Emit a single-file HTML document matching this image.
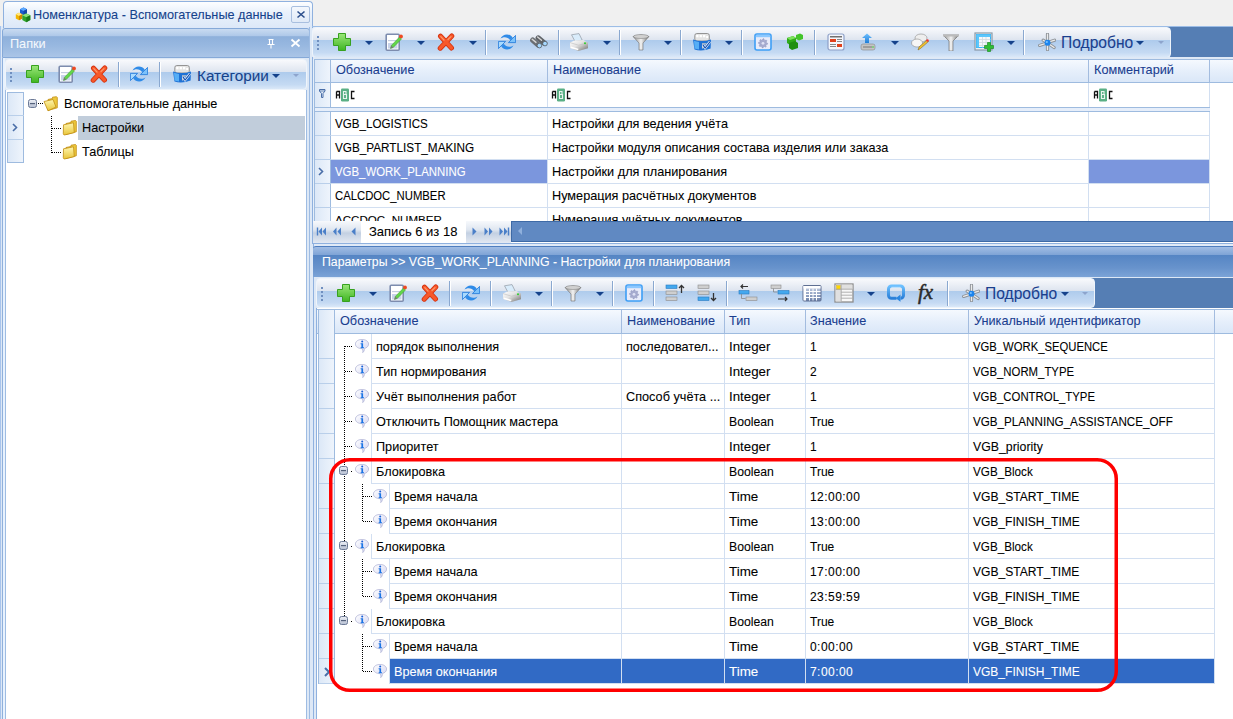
<!DOCTYPE html>
<html><head><meta charset="utf-8"><style>
*{box-sizing:border-box;margin:0;padding:0}
html,body{width:1233px;height:719px;overflow:hidden;background:#f0f0f0;font-family:"Liberation Sans",sans-serif;font-size:12.7px;color:#000;position:relative}
.a{position:absolute}
.t{position:absolute;white-space:nowrap;line-height:14px;-webkit-text-stroke:0.08px currentColor}
.lat{font-size:12px}
.cap{font-size:11.6px}
svg.a{overflow:visible}
#tab{left:3px;top:1px;width:310px;height:27px;border:1px solid #8fb1df;border-bottom:none;border-radius:4px 4px 0 0;background:linear-gradient(#fdfeff,#e9f1fb 40%,#dce8f8)}
#frame{left:0;top:26px;width:1233px;height:693px;background:#dde8f6}
#lp{left:0px;top:26px;width:310px;height:693px;background:#dde8f6;border-left:1px solid #a8c4ec}
#lphdr{left:2px;top:28px;width:308px;height:30px;border:1px solid #85a9d8;border-radius:3px 3px 0 0;background:linear-gradient(#c9dbf1,#adc7e8 26%,#8eb0db 27%,#98b8e0 60%,#aac5e7)}
.tb{background:linear-gradient(#f8f9fc,#dde4ef 42%,#aecbec 43%,#c5daf3 85%,#dae8f8);border:1px solid #eef4fb;border-radius:4px}
#lptb{left:5px;top:59px;width:302px;height:31px}
#lptree{left:5px;top:90px;width:302px;height:629px;background:#fff;border-left:1px solid #9ebce3;border-right:1px solid #9ebce3}
#rtb{left:312px;top:27px;width:859px;height:31px;border-radius:4px}
#rdark{left:1160px;top:27px;width:73px;height:30px;background:#557eb4}
.hdr{background:linear-gradient(#f5f9fe,#e6effb 50%,#dae7f8);border-top:1px solid #9ebbdf;border-bottom:1px solid #9ebbdf}
.hc{color:#1a3d8f}
.vl{position:absolute;width:1px;background:#d2dff1}
.hl{position:absolute;height:1px;background:#d2dff1}
.ind{background:linear-gradient(90deg,#dce8f7,#eef4fc);border-right:1px solid #9ebbdf}
#dhdr{left:313px;top:246px;width:920px;height:31px;border-radius:3px 0 0 0;border-top:1px solid #4f7ebf;background:linear-gradient(#a1bde4,#7fa4d6 26%,#5585c4 27%,#6893cc 70%,#7ba3d7)}
#dtb{left:316px;top:278px;width:779px;height:30px;border-radius:4px}
#ddark{left:1080px;top:278px;width:153px;height:30px;background:#557eb4}
.sep{position:absolute;width:1px;background:#8aa8d0;box-shadow:1px 0 0 #fff}
.dd{position:absolute;width:0;height:0;border-left:4px solid transparent;border-right:4px solid transparent;border-top:4.5px solid #15428b}
.ddl{position:absolute;width:0;height:0;border-left:3px solid transparent;border-right:3px solid transparent;border-top:3.5px solid #8da4cc}
</style></head><body>
<svg width="0" height="0" style="position:absolute">
<defs>
<linearGradient id="gGreen" x1="0" y1="0" x2="0" y2="1"><stop offset="0" stop-color="#9be77a"/><stop offset="1" stop-color="#3fb522"/></linearGradient>
<linearGradient id="gRed" x1="0" y1="0" x2="1" y2="1"><stop offset="0" stop-color="#ff7a4a"/><stop offset="1" stop-color="#e02c10"/></linearGradient>
<linearGradient id="gBlue" x1="0" y1="0" x2="0" y2="1"><stop offset="0" stop-color="#6ec0ff"/><stop offset="1" stop-color="#1f7ed8"/></linearGradient>
<linearGradient id="gMetal" x1="0" y1="0" x2="1" y2="0"><stop offset="0" stop-color="#8a8a8a"/><stop offset=".5" stop-color="#f2f2f2"/><stop offset="1" stop-color="#6f6f6f"/></linearGradient>
<linearGradient id="gFolder" x1="0" y1="0" x2="0" y2="1"><stop offset="0" stop-color="#fff7b0"/><stop offset="1" stop-color="#e8c53a"/></linearGradient>
<symbol id="iPlus" viewBox="0 0 18 18"><path d="M5.5 .5h7v5h5v7h-5v5h-7v-5h-5v-7h5z" fill="url(#gGreen)" stroke="#37a11f" stroke-width="1"/></symbol>
<symbol id="iEdit" viewBox="0 0 18 18"><rect x="1.2" y="1.2" width="13" height="16" rx="1" fill="#fff" stroke="#7d8cae" stroke-width="1.6"/><rect x="3" y="7" width="9.5" height="1.2" fill="#c5cde0"/><rect x="3" y="10" width="9.5" height="5.5" fill="#c9d3ea"/><path d="M5.5 15.5l.8-3L14.5 4l2 2-8.2 8.4z" fill="#62d64a" stroke="#3c9a2a" stroke-width=".5"/><path d="M5.5 15.5l.8-3 2 2z" fill="#777"/><circle cx="16" cy="3.4" r="1.9" fill="#ee4a22"/></symbol>
<symbol id="iDel" viewBox="0 0 18 18"><path d="M3.5 3.2L14.5 15M14.8 3L3.2 15.2" stroke="#d4320f" stroke-width="5" stroke-linecap="round"/><path d="M3.5 3.2L14.5 15M14.8 3L3.2 15.2" stroke="#f7582a" stroke-width="3.4" stroke-linecap="round"/><path d="M3.8 3.6L7 7M14 3.6L11 6.5" stroke="#ff9a6a" stroke-width="1.2" stroke-linecap="round"/></symbol>
<symbol id="iRef" viewBox="0 0 18 18"><path d="M2.5 5.8C4 1.2 11.5-.5 14.8 4.8L12.2 7.3C10.2 3.8 5.2 3.4 2.5 5.8Z" fill="#2f8be8"/><path d="M17.6 2.4V9.6H10.4Z" fill="#7cc2fb" stroke="#2a7fdc" stroke-width=".9" stroke-linejoin="round"/><path d="M15.5 12.2C14 16.8 6.5 18.5 3.2 13.2L5.8 10.7C7.8 14.2 12.8 14.6 15.5 12.2Z" fill="#2f8be8"/><path d="M.4 15.6V8.4H7.6Z" fill="#a9dafe" stroke="#2a7fdc" stroke-width=".9" stroke-linejoin="round"/></symbol>
<symbol id="iBino" viewBox="0 0 18 14"><path d="M2.8 5.2L8.6 10.2" stroke="#6a6e73" stroke-width="5.4" stroke-linecap="round"/><path d="M8.3 3L14.5 8.2" stroke="#5f6368" stroke-width="5.4" stroke-linecap="round"/><path d="M2.2 4.2L6 7.4M7.6 2L11.5 5.2" stroke="#d6d6d6" stroke-width="1.4" stroke-linecap="round"/><circle cx="9.4" cy="10.6" r="2.3" fill="#a6d8ff" stroke="#4e5156" stroke-width=".7"/><circle cx="15" cy="8.6" r="2.3" fill="#a6d8ff" stroke="#4e5156" stroke-width=".7"/></symbol>
<symbol id="iPrint" viewBox="0 0 18 18"><linearGradient id="gPr" x1="0" y1="0" x2="1" y2="1"><stop offset="0" stop-color="#ffffff"/><stop offset=".45" stop-color="#e2e2e2"/><stop offset="1" stop-color="#6e6e6e"/></linearGradient><path d="M1.5 1.8L9 .6l3.2 6.6-7.2 1.2z" fill="#d9ecfb" stroke="#9aa3ad" stroke-width=".8" stroke-linejoin="round"/><path d="M0 9.6L4.5 7.6 13.5 7l4.5 2.8v5.4L8.5 18 0 15z" fill="url(#gPr)"/><path d="M0 9.6l8.5 2.6L18 9.8" stroke="#bdbdbd" stroke-width=".6" fill="none"/><path d="M.8 14.2l7.5 2.4" stroke="#fff" stroke-width="1.6"/><circle cx="15" cy="10.2" r="1" fill="#2ccf2c"/></symbol>
<symbol id="iFunnel" viewBox="0 0 18 18"><path d="M1 3.5Q9 .5 17 3.5L11 10v7H7v-7z" fill="url(#gMetal)" stroke="#707070" stroke-width=".6"/><ellipse cx="9" cy="3.5" rx="7.5" ry="2" fill="#d0d0d0" stroke="#777" stroke-width=".5"/></symbol>
<symbol id="iBox" viewBox="0 0 18 18"><rect x="1.8" y=".5" width="14.5" height="7.5" rx="2" fill="#e4e4e4" stroke="#8a8a8a" stroke-width=".9"/><rect x="3.2" y="2" width="2.3" height="2.3" fill="#fff"/><rect x="6.6" y="2" width="2.3" height="2.3" fill="#fff"/><rect x="10" y="2" width="2.3" height="2.3" fill="#fff"/><rect x="13.2" y="3" width="2" height="2" fill="#fff"/><path d="M0 6.5Q9 9.5 18 6.5L17.6 15.5Q9 18.8 1.5 16.5z" fill="#1f72d6"/><path d="M1 7.8Q4 8.8 6 9v7.4Q3 16.2 1.6 15.6z" fill="#56aef6"/><path d="M9.6 15.5V10.8h4" stroke="#c8c8c8" stroke-width="1.2" fill="none"/><path d="M9.8 11.6l2.3 3.4 4.8-6.2" stroke="#fff" stroke-width="2.4" fill="none"/><path d="M9.8 11.6l2.3 3.4 4.8-6.2" stroke="#1550b0" stroke-width="1.2" fill="none"/></symbol>
<symbol id="iGearWin" viewBox="0 0 18 18"><rect x="1" y="1" width="16" height="16" rx="2" fill="#e9ecfa" stroke="#3d9ef6" stroke-width="1.6"/><rect x="1.8" y="1.8" width="14.4" height="2.4" fill="#8cc8ff"/><path d="M13.60 10.30L13.51 11.20L12.14 11.60L11.83 12.19L12.25 13.55L11.56 14.12L10.30 13.44L9.66 13.63L9.00 14.90L8.10 14.81L7.70 13.44L7.11 13.13L5.75 13.55L5.18 12.86L5.86 11.60L5.67 10.96L4.40 10.30L4.49 9.40L5.86 9.00L6.17 8.41L5.75 7.05L6.44 6.48L7.70 7.16L8.34 6.97L9.00 5.70L9.90 5.79L10.30 7.16L10.89 7.47L12.25 7.05L12.82 7.74L12.14 9.00L12.33 9.64Z" fill="#a6abcf" stroke="#8d93bb" stroke-width=".5"/><circle cx="9" cy="10.3" r="1.4" fill="#dfe2f5"/></symbol>
<symbol id="iCubes" viewBox="0 0 18 18"><path d="M1 5l6-2 3 2v5l-6 2-3-2z" fill="#2faa1a"/><path d="M3 10l6-2 3 2v5l-6 2-3-2z" fill="#1f8f12"/><path d="M10 2l4-1.5 3 1.5v4l-4 1.5-3-1.5z" fill="#43c42a"/><path d="M1 5l6-2 3 2-6 2z" fill="#7be25a"/></symbol>
<symbol id="iReport" viewBox="0 0 18 18"><rect x="1" y="1" width="16" height="16" rx="2" fill="#f4f6fb" stroke="#8da0c8" stroke-width="1.2"/><rect x="3" y="3" width="12" height="1.5" fill="#707070"/><rect x="3" y="6" width="6" height="3" fill="#e0401c"/><rect x="10" y="6" width="5" height="1" fill="#888"/><rect x="10" y="8" width="5" height="1" fill="#888"/><rect x="3" y="11" width="6" height="1" fill="#888"/><rect x="3" y="13" width="6" height="1" fill="#888"/><rect x="10" y="11" width="5" height="3" fill="#e0401c"/></symbol>
<symbol id="iUpload" viewBox="0 0 18 18"><path d="M8 .5L13 5h-3v5H6V5H3z" fill="url(#gBlue)"/><rect x="2" y="11" width="14" height="6" rx="2" fill="#c4c4c4" stroke="#888" stroke-width=".6"/><rect x="4" y="13.5" width="9" height="1" fill="#777"/><circle cx="14" cy="14" r=".8" fill="#35d135"/></symbol>
<symbol id="iChat" viewBox="0 0 18 18"><ellipse cx="10" cy="5" rx="6" ry="4" fill="#eee" stroke="#999" stroke-width=".7"/><ellipse cx="6" cy="10" rx="5.5" ry="4" fill="#f6f6f6" stroke="#999" stroke-width=".7"/><path d="M7 17l1-3 8-7 1.5 1.5-8 7z" fill="#f1c232" stroke="#7a5a10" stroke-width=".5"/><circle cx="16.5" cy="7.5" r="1.2" fill="#e33"/></symbol>
<symbol id="iFunnel2" viewBox="0 0 18 18"><path d="M1 2h16l-6 6v10H7V8z" fill="url(#gMetal)" stroke="#666" stroke-width=".6"/><rect x="1" y="1.5" width="16" height="2" fill="#bbb"/></symbol>
<symbol id="iTable" viewBox="0 0 20 20"><rect x="1" y="1" width="17" height="17" fill="#eef1f3" stroke="#8a9aa8" stroke-width="1.2"/><rect x="2.5" y="2.5" width="14" height="13" fill="#f4f8fa" stroke="#39b4f4" stroke-width="1"/><rect x="2.5" y="2.5" width="14" height="2.5" fill="#5cc6fb"/><rect x="2.5" y="2.5" width="2.5" height="13" fill="#5cc6fb"/><path d="M5 7.5h11.5M5 10.5h11.5M5 13.5h11.5M8.5 5v10.5M12 5v10.5" stroke="#cfd8de" stroke-width=".8"/><path d="M13.5 10.5h3v3h3v3h-3v3h-3v-3h-3v-3h3z" fill="#2fbf36" stroke="#1e8e24" stroke-width=".7"/></symbol>
<symbol id="iStar" viewBox="0 0 18 18"><path d="M9.5 1.2v15.5M9 10L1.6 12.4M9 9.5L5.2 7.2M9.5 9.5L16.6 7.2M9.5 10l6.6 4.5" stroke="#8e9399" stroke-width="3.2" stroke-linecap="round"/><path d="M9.5 1.2v15.5M9 10L1.6 12.4M9 9.5L5.2 7.2M9.5 9.5L16.6 7.2M9.5 10l6.6 4.5" stroke="#ececec" stroke-width="1.3" stroke-linecap="round"/><circle cx="9.5" cy="9.8" r="3" fill="#1b84ee"/><circle cx="8.8" cy="9" r="1.1" fill="#7cc4ff"/></symbol>
<symbol id="iInfo" viewBox="0 0 14 14"><linearGradient id="gBub" x1="0" y1="0" x2="1" y2="1"><stop offset="0" stop-color="#ffffff"/><stop offset="1" stop-color="#d2d4f2"/></linearGradient><path d="M7 .4C10.6.4 13.6 2.4 13.6 5.1c0 2.2-2 3.9-4.3 4.4.3 1.5-.3 3-1.6 4.1.4-1.3.2-2.7-.6-3.9C3.5 9.6.4 7.8.4 5.1.4 2.4 3.4.4 7 .4z" fill="url(#gBub)" stroke="#b0b4d6" stroke-width=".8"/><circle cx="7.2" cy="2.5" r="1" fill="#1a5fd6"/><path d="M5.6 4.3h2.5v3.9h.9v1h-3.4v-1h.8V5.3h-.8z" fill="#1b74e4"/></symbol>
<symbol id="iMinus" viewBox="0 0 9 9"><linearGradient id="gMin" x1="0" y1="0" x2="0" y2="1"><stop offset="0" stop-color="#eef1f7"/><stop offset="1" stop-color="#b4bdd0"/></linearGradient><rect x=".5" y=".5" width="8" height="8" rx="2" fill="url(#gMin)" stroke="#6c7a96" stroke-width="1"/><rect x="2" y="4" width="5" height="1.2" fill="#55627c"/></symbol>
<symbol id="iFolder" viewBox="0 0 16 16"><path d="M5 3.5l4.5-1V1.2l4-.5.8.8v10.3L5 14.5z" fill="#ecc83c" stroke="#c08d12" stroke-width=".8" stroke-linejoin="round"/><path d="M1 5.5l9-2 3 7.5-8 3.8z" fill="url(#gFolder)" stroke="#c08d12" stroke-width=".8" stroke-linejoin="round"/></symbol>
<symbol id="iFolderC" viewBox="0 0 16 16"><path d="M4 3.5l5-1V1.2l4.5-.7.8.8v10.5L4 14.5z" fill="#ecc83c" stroke="#c08d12" stroke-width=".8" stroke-linejoin="round"/><path d="M1.5 4.8l10-2 .8 9.8-9.5 2.3c-1 .2-1.5-.5-1.5-1.2z" fill="url(#gFolder)" stroke="#c08d12" stroke-width=".8" stroke-linejoin="round"/></symbol>
<symbol id="iApp" viewBox="0 0 16 16"><path d="M5 2.2L8.5.5 12 2.2v4.3L8.5 8.2 5 6.5z" fill="#1c5fd0"/><path d="M5 2.2L8.5.5 12 2.2 8.5 3.9z" fill="#5aa8ff"/><path d="M8.5 3.9L12 2.2v4.3L8.5 8.2z" fill="#1448a8"/><path d="M.8 7.3L4 5.8 7.3 7.3v4.3L4 13.2.8 11.6z" fill="#f2b600"/><path d="M.8 7.3L4 5.8 7.3 7.3 4 8.9z" fill="#ffe680"/><path d="M4 8.9l3.3-1.6v4.3L4 13.2z" fill="#d08a00"/><path d="M7.3 8.2l4-1.8 4 1.8v4.8l-4 2.2-4-2.2z" fill="#2ea52a"/><path d="M7.3 8.2l4-1.8 4 1.8-4 2z" fill="#8de07a"/><path d="M11.3 10.2l4-2v4.8l-4 2.2z" fill="#1c7a1a"/></symbol>
<symbol id="iUp" viewBox="0 0 20 18"><rect x="1" y="1" width="11" height="3.5" fill="#43a8ee" stroke="#2a7bc0" stroke-width=".6"/><rect x="1" y="7" width="11" height="3.5" fill="#cfcfcf" stroke="#8b8b8b" stroke-width=".6"/><rect x="1" y="13" width="11" height="3.5" fill="#cfcfcf" stroke="#8b8b8b" stroke-width=".6"/><path d="M16.5 9V1.5M14 4l2.5-2.5L19 4" stroke="#333" stroke-width="1.3" fill="none"/></symbol>
<symbol id="iDown" viewBox="0 0 20 18"><rect x="1" y="1" width="11" height="3.5" fill="#cfcfcf" stroke="#8b8b8b" stroke-width=".6"/><rect x="1" y="7" width="11" height="3.5" fill="#cfcfcf" stroke="#8b8b8b" stroke-width=".6"/><rect x="1" y="13" width="11" height="3.5" fill="#43a8ee" stroke="#2a7bc0" stroke-width=".6"/><path d="M16.5 9v7.5M14 14l2.5 2.5L19 14" stroke="#333" stroke-width="1.3" fill="none"/></symbol>
<symbol id="iOut" viewBox="0 0 20 18"><path d="M3 2.5h7M5 .5l-2 2 2 2" stroke="#333" stroke-width="1.2" fill="none"/><rect x="1" y="6.5" width="10" height="3.5" fill="#43a8ee" stroke="#2a7bc0" stroke-width=".6"/><path d="M3.5 10v4.5h4" stroke="#888" stroke-width=".8" fill="none"/><rect x="8" y="13" width="11" height="3.5" fill="#cfcfcf" stroke="#8b8b8b" stroke-width=".6"/></symbol>
<symbol id="iIn" viewBox="0 0 20 18"><rect x="1" y="1" width="10" height="3.5" fill="#cfcfcf" stroke="#8b8b8b" stroke-width=".6"/><path d="M3.5 4.5v3.5h4" stroke="#888" stroke-width=".8" fill="none"/><rect x="8" y="6.5" width="11" height="3.5" fill="#43a8ee" stroke="#2a7bc0" stroke-width=".6"/><path d="M8 15h9M15 13l2 2-2 2" stroke="#333" stroke-width="1.2" fill="none"/></symbol>
<symbol id="iCalc" viewBox="0 0 20 18"><linearGradient id="gCalc" x1="0" y1="0" x2="0" y2="1"><stop offset="0" stop-color="#c9d3e6"/><stop offset="1" stop-color="#6e83ab"/></linearGradient><rect x="1" y="1.5" width="18" height="15.5" rx="1" fill="url(#gCalc)" stroke="#5f6f92" stroke-width="1"/><rect x="1.5" y="2" width="17" height="2.5" fill="#fff"/><rect x="1.5" y="2" width="2.5" height="14.5" fill="#fff"/><path d="M4 7.5h14.5M4 10.5h14.5M4 13.5h14.5M7.5 4.5v12M11 4.5v12M14.5 4.5v12" stroke="#fff" stroke-width="1"/></symbol>
<symbol id="iTbl2" viewBox="0 0 20 20"><rect x="1" y="1" width="18" height="18" fill="#f8f8f8" stroke="#8d8d8d" stroke-width="1.3"/><rect x="1.6" y="1.6" width="5.6" height="16.8" fill="#e0e0e0"/><rect x="7.2" y="1.6" width="11.2" height="4.6" fill="#e0e0e0"/><rect x="2.6" y="2.6" width="3.6" height="3.6" fill="#ffd800" stroke="#e0b000" stroke-width=".4"/><path d="M7.2 1.6v16.8M1.6 6.2h16.8M7.2 9.2h11.2M7.2 12.2h11.2M7.2 15.2h11.2" stroke="#a0a0a0" stroke-width=".8"/></symbol>
<symbol id="iLoop" viewBox="0 0 18 18"><linearGradient id="gLoop" x1="0" y1="0" x2="0" y2="1"><stop offset="0" stop-color="#6cc0ff"/><stop offset="1" stop-color="#2a7fd8"/></linearGradient><path d="M9.5 14.2H4.5a3 3 0 0 1-3-3V5a3 3 0 0 1 3-3h9a3 3 0 0 1 3 3v6.2a3 3 0 0 1-3 3" stroke="url(#gLoop)" stroke-width="3" fill="none"/><path d="M4.5 3.3h9" stroke="#c8e8ff" stroke-width=".8"/><path d="M13.5 10.6l-4.8 3.6 4.8 3.6z" fill="#2a86e0"/></symbol>
</defs></svg>

<div id="frame" class="a"></div>
<div id="lp" class="a"></div>
<div class="vl" style="left:2px;top:58px;height:661px;background:#8fb0dc"></div>
<div class="a" style="left:3px;top:58px;width:2px;height:661px;background:#e8f2fe"></div>
<div id="tab" class="a"></div>
<svg class="a" style="left:15px;top:7px" width="16" height="16"><use href="#iApp"/></svg>
<div class="t " style="left:33px;top:8px;color:#15428b">Номенклатура - Вспомогательные данные</div>
<div class="a" style="left:291px;top:6px;width:19px;height:17px;border:1px solid #a8bfdf;border-radius:2px;background:linear-gradient(#f4f8fd,#e0eaf7)"></div>
<svg class="a" style="left:297px;top:11px" width="8" height="7"><path d="M.5 .5l7 6M7.5 .5l-7 6" stroke="#2c4f8c" stroke-width="1.6"/></svg>
<div id="lphdr" class="a"></div>
<div class="t " style="left:10px;top:37px;color:#f4f8fd">Папки</div>
<svg class="a" style="left:267px;top:39px" width="8" height="10"><path d="M1.5 .5h5M2.5 .5v5M5.5 .5v5M.5 5.5h7M4 5.5v4" stroke="#fff" stroke-width="1.1" fill="none"/></svg>
<svg class="a" style="left:291px;top:39px" width="9" height="8"><path d="M.5 .5l8 7M8.5 .5l-8 7" stroke="#fff" stroke-width="1.8"/></svg>
<div id="lptb" class="a tb"></div>
<div class="a" style="left:10px;top:68px;width:2px;height:2px;background:#6f8fbf"></div>
<div class="a" style="left:10px;top:72px;width:2px;height:2px;background:#6f8fbf"></div>
<div class="a" style="left:10px;top:76px;width:2px;height:2px;background:#6f8fbf"></div>
<div class="a" style="left:10px;top:80px;width:2px;height:2px;background:#6f8fbf"></div>
<svg class="a" style="left:26px;top:65px" width="18" height="18"><use href="#iPlus"/></svg>
<svg class="a" style="left:58px;top:65px" width="18" height="18"><use href="#iEdit"/></svg>
<svg class="a" style="left:90px;top:65px" width="18" height="18"><use href="#iDel"/></svg>
<div class="sep" style="left:118px;top:62px;height:25px"></div>
<svg class="a" style="left:130px;top:65px" width="18" height="18"><use href="#iRef"/></svg>
<div class="sep" style="left:159px;top:62px;height:25px"></div>
<svg class="a" style="left:173px;top:65px" width="18" height="18"><use href="#iBox"/></svg>
<div class="t " style="left:197px;top:67px;font-size:15.3px;line-height:17px;color:#15428b">Категории</div>
<div class="dd" style="left:272px;top:74px"></div>
<div class="ddl" style="left:293px;top:74px"></div>
<div id="lptree" class="a"></div>
<div class="a ind" style="left:7px;top:92px;width:17px;height:71px;border:1px solid #9ebbdf;border-left:1px solid #9ebbdf"></div>
<div class="hl" style="left:8px;top:115px;width:16px;background:#b9cfea"></div>
<div class="hl" style="left:8px;top:139px;width:16px;background:#b9cfea"></div>
<svg class="a" style="left:12px;top:123px" width="6" height="9"><path d="M1 1l3.5 3.5L1 8" stroke="#4a6ea8" stroke-width="1.6" fill="none"/></svg>
<div class="a" style="left:78px;top:116px;width:227px;height:24px;background:#c1cddb"></div>
<svg class="a" style="left:28px;top:99px" width="9" height="9"><use href="#iMinus"/></svg>
<svg class="a" style="left:43px;top:96px" width="16" height="16"><use href="#iFolder"/></svg>
<svg class="a" style="left:62px;top:120px" width="16" height="16"><use href="#iFolderC"/></svg>
<svg class="a" style="left:62px;top:144px" width="16" height="16"><use href="#iFolderC"/></svg>
<svg class="a" style="left:0;top:0" width="310" height="719"><path d="M38 103.5h5M51.5 116v37M52 128.5h9M52 152.5h9" stroke="#000" stroke-width="1" stroke-dasharray="1 1" fill="none"/></svg>
<div class="t " style="left:64px;top:97px;">Вспомогательные данные</div>
<div class="t " style="left:82px;top:121px;">Настройки</div>
<div class="t " style="left:82px;top:145px;">Таблицы</div>
<div class="hl" style="left:312px;top:26px;width:921px;background:#9dbde6"></div>
<div id="rdark" class="a"></div>
<div id="rtb" class="a tb"></div>
<div class="a" style="left:317px;top:36px;width:2px;height:2px;background:#6f8fbf"></div>
<div class="a" style="left:317px;top:40px;width:2px;height:2px;background:#6f8fbf"></div>
<div class="a" style="left:317px;top:44px;width:2px;height:2px;background:#6f8fbf"></div>
<div class="a" style="left:317px;top:48px;width:2px;height:2px;background:#6f8fbf"></div>
<div class="vl" style="left:309px;top:27px;height:692px;background:#9ebce3"></div>
<svg class="a" style="left:333px;top:33px" width="18" height="18"><use href="#iPlus"/></svg>
<div class="dd" style="left:365px;top:41px"></div>
<svg class="a" style="left:385px;top:33px" width="18" height="18"><use href="#iEdit"/></svg>
<div class="dd" style="left:417px;top:41px"></div>
<svg class="a" style="left:437px;top:33px" width="18" height="18"><use href="#iDel"/></svg>
<div class="dd" style="left:469px;top:41px"></div>
<div class="sep" style="left:485px;top:30px;height:25px"></div>
<svg class="a" style="left:498px;top:33px" width="18" height="18"><use href="#iRef"/></svg>
<svg class="a" style="left:530px;top:35px" width="18" height="14"><use href="#iBino"/></svg>
<div class="sep" style="left:558px;top:30px;height:25px"></div>
<svg class="a" style="left:570px;top:33px" width="18" height="18"><use href="#iPrint"/></svg>
<div class="dd" style="left:603px;top:41px"></div>
<div class="sep" style="left:619px;top:30px;height:25px"></div>
<svg class="a" style="left:632px;top:33px" width="18" height="18"><use href="#iFunnel"/></svg>
<div class="dd" style="left:664px;top:41px"></div>
<div class="sep" style="left:680px;top:30px;height:25px"></div>
<svg class="a" style="left:693px;top:33px" width="18" height="18"><use href="#iBox"/></svg>
<div class="dd" style="left:725px;top:41px"></div>
<div class="sep" style="left:741px;top:30px;height:25px"></div>
<svg class="a" style="left:754px;top:33px" width="18" height="18"><use href="#iGearWin"/></svg>
<svg class="a" style="left:786px;top:33px" width="18" height="18"><use href="#iCubes"/></svg>
<div class="sep" style="left:814px;top:30px;height:25px"></div>
<svg class="a" style="left:827px;top:33px" width="18" height="18"><use href="#iReport"/></svg>
<svg class="a" style="left:859px;top:33px" width="18" height="18"><use href="#iUpload"/></svg>
<div class="dd" style="left:891px;top:41px"></div>
<svg class="a" style="left:911px;top:33px" width="18" height="18"><use href="#iChat"/></svg>
<svg class="a" style="left:942px;top:33px" width="18" height="18"><use href="#iFunnel2"/></svg>
<svg class="a" style="left:974px;top:32px" width="20" height="20"><use href="#iTable"/></svg>
<div class="dd" style="left:1007px;top:41px"></div>
<div class="sep" style="left:1023px;top:30px;height:25px"></div>
<svg class="a" style="left:1038px;top:33px" width="18" height="18"><use href="#iStar"/></svg>
<div class="t " style="left:1061px;top:34px;font-size:15.6px;line-height:17px;color:#1a3f8e">Подробно</div>
<div class="dd" style="left:1136px;top:41px"></div>
<div class="ddl" style="left:1158px;top:41px"></div>
<div class="a" style="left:312px;top:57px;width:921px;height:187px;background:#fff;border-left:1px solid #8fb1df"></div>
<div class="a" style="left:313px;top:57px;width:1px;height:165px;background:#e6eff9"></div>
<div class="vl" style="left:314px;top:59px;height:162px;background:#9ebbdf"></div>
<div class="a" style="left:313px;top:57px;width:920px;height:2px;background:#dfe9f6"></div>
<div class="a hdr" style="left:315px;top:59px;width:918px;height:24px"></div>
<div class="a ind" style="left:315px;top:60px;width:16px;height:161px"></div>
<div class="vl" style="left:547px;top:83px;height:138px"></div>
<div class="vl" style="left:1088px;top:83px;height:138px"></div>
<div class="vl" style="left:1209px;top:83px;height:138px"></div>
<div class="vl" style="left:547px;top:60px;height:22px;background:#a3bcdf"></div>
<div class="vl" style="left:1088px;top:60px;height:22px;background:#a3bcdf"></div>
<div class="vl" style="left:1209px;top:60px;height:22px;background:#a3bcdf"></div>
<div class="hl" style="left:315px;top:107px;width:895px;background:#9ebbdf"></div>
<div class="a" style="left:315px;top:108px;width:895px;height:3px;background:#e6eefa"></div>
<div class="hl" style="left:315px;top:111px;width:895px;background:#9ebbdf"></div>
<div class="hl" style="left:315px;top:82px;width:918px;background:#9ebbdf"></div>
<div class="hl" style="left:331px;top:135px;width:879px"></div>
<div class="hl" style="left:315px;top:135px;width:16px;background:#b9cfea"></div>
<div class="hl" style="left:331px;top:159px;width:879px"></div>
<div class="hl" style="left:315px;top:159px;width:16px;background:#b9cfea"></div>
<div class="hl" style="left:331px;top:183px;width:879px"></div>
<div class="hl" style="left:315px;top:183px;width:16px;background:#b9cfea"></div>
<div class="hl" style="left:331px;top:207px;width:879px"></div>
<div class="hl" style="left:315px;top:207px;width:16px;background:#b9cfea"></div>
<div class="a" style="left:331px;top:160px;width:216px;height:23px;background:#7b96dd"></div>
<div class="a" style="left:1089px;top:160px;width:120px;height:23px;background:#7b96dd"></div>
<svg class="a" style="left:318px;top:167px" width="6" height="9"><path d="M1 1l3.5 3.5L1 8" stroke="#4a6ea8" stroke-width="1.6" fill="none"/></svg>
<svg class="a" style="left:318px;top:88px" width="9" height="11"><path d="M1.5 1.5h5.5v1.5l-2 2.5v4h-1.5v-4l-2-2.5z" fill="none" stroke="#4a6ea8" stroke-width="1"/><path d="M1.5 3h5.5" stroke="#4a6ea8" stroke-width=".8"/></svg>
<svg class="a" style="left:336px;top:88px" width="20" height="14"><rect x="5" y=".5" width="8" height="13" rx="1.2" fill="#5aaf85"/><path d="M.5 3.5h3v7M.5 3.5v7M.5 7h3" stroke="#111" stroke-width="1.3" fill="none"/><path d="M7.5 3.5h2.5v3h-2.5zM7.5 6.5h3v4h-3zM7.5 3.5v7" stroke="#e8f4ee" stroke-width="1.1" fill="none"/><path d="M18.5 3.5h-3v7h3" stroke="#111" stroke-width="1.3" fill="none"/></svg>
<svg class="a" style="left:552px;top:88px" width="20" height="14"><rect x="5" y=".5" width="8" height="13" rx="1.2" fill="#5aaf85"/><path d="M.5 3.5h3v7M.5 3.5v7M.5 7h3" stroke="#111" stroke-width="1.3" fill="none"/><path d="M7.5 3.5h2.5v3h-2.5zM7.5 6.5h3v4h-3zM7.5 3.5v7" stroke="#e8f4ee" stroke-width="1.1" fill="none"/><path d="M18.5 3.5h-3v7h3" stroke="#111" stroke-width="1.3" fill="none"/></svg>
<svg class="a" style="left:1094px;top:88px" width="20" height="14"><rect x="5" y=".5" width="8" height="13" rx="1.2" fill="#5aaf85"/><path d="M.5 3.5h3v7M.5 3.5v7M.5 7h3" stroke="#111" stroke-width="1.3" fill="none"/><path d="M7.5 3.5h2.5v3h-2.5zM7.5 6.5h3v4h-3zM7.5 3.5v7" stroke="#e8f4ee" stroke-width="1.1" fill="none"/><path d="M18.5 3.5h-3v7h3" stroke="#111" stroke-width="1.3" fill="none"/></svg>
<div class="t hc" style="left:336px;top:63px;">Обозначение</div>
<div class="t hc" style="left:553px;top:63px;">Наименование</div>
<div class="t hc" style="left:1094px;top:63px;">Комментарий</div>
<div class="t" style="left:335px;top:117px;font-size:12px;transform:scaleX(0.9667);transform-origin:0 0;">VGB_LOGISTICS</div>
<div class="t " style="left:552px;top:117px;">Настройки для ведения учёта</div>
<div class="t" style="left:335px;top:141px;font-size:12px;transform:scaleX(0.9782);transform-origin:0 0;">VGB_PARTLIST_MAKING</div>
<div class="t " style="left:552px;top:141px;">Настройки модуля описания состава изделия или заказа</div>
<div class="t" style="left:335px;top:165px;font-size:12px;transform:scaleX(0.9505);transform-origin:0 0;color:#fff">VGB_WORK_PLANNING</div>
<div class="t " style="left:552px;top:165px;">Настройки для планирования</div>
<div class="t" style="left:335px;top:189px;font-size:12px;transform:scaleX(0.9421);transform-origin:0 0;">CALCDOC_NUMBER</div>
<div class="t " style="left:552px;top:189px;">Нумерация расчётных документов</div>
<div class="a" style="left:331px;top:208px;width:878px;height:13px;overflow:hidden"><div class="t cap" style="left:4px;top:5px">ACCDOC_NUMBER</div><div class="t" style="left:221px;top:5px">Нумерация учётных документов</div></div>
<div class="a" style="left:313px;top:221px;width:920px;height:22px;background:#fff"></div>
<div class="a" style="left:313px;top:221px;width:48px;height:22px;background:linear-gradient(#f7f9fc,#dfe6f0 40%,#c3d0e2 55%,#e3e9f2)"></div>
<div class="a" style="left:466px;top:221px;width:45px;height:22px;background:linear-gradient(#f7f9fc,#dfe6f0 40%,#c3d0e2 55%,#e3e9f2)"></div>
<svg class="a" style="left:316px;top:227px" width="44" height="10"><path d="M1.5 .5v8" stroke="#4a7fc8" stroke-width="1.4"/><path d="M6 .5L2.5 4.5 6 8.5zM10 .5L6.5 4.5 10 8.5zM20.5 .5L17 4.5l3.5 4zM25 .5l-3.5 4 3.5 4zM39.5 .5L35.5 4.5l4 4z" fill="#4a7fc8"/></svg>
<svg class="a" style="left:466px;top:227px" width="44" height="10"><path d="M6.5 .5l4 4-4 4zM18.5 .5l3.5 4-3.5 4zM23 .5l3.5 4-3.5 4zM33.5 .5l3.5 4-3.5 4zM38 .5l3.5 4-3.5 4z" fill="#4a7fc8"/><path d="M42.5 .5v8" stroke="#4a7fc8" stroke-width="1.4"/></svg>
<div class="t " style="left:369px;top:225px;font-size:13px">Запись 6 из 18</div>
<div class="a" style="left:511px;top:221px;width:722px;height:21px;background:#6089c2;border-top:1px solid #3e6aa6;border-bottom:1px solid #3e6aa6;border-left:1px solid #3e6aa6"></div>
<svg class="a" style="left:517px;top:226px" width="6" height="10"><path d="M5 1L1 5l4 4z" fill="#8fb0dc"/></svg>
<div class="a" style="left:313px;top:244px;width:920px;height:2px;background:#e0eaf7"></div>
<div class="vl" style="left:313px;top:243px;height:476px;background:#8fb1df"></div>
<div class="hl" style="left:312px;top:243px;width:921px;background:#8fb1df"></div>
<div id="dhdr" class="a"></div>
<div class="t " style="left:322px;top:255px;color:#fff;font-size:12.3px">Параметры &gt;&gt; VGB_WORK_PLANNING - Настройки для планирования</div>
<div id="ddark" class="a"></div>
<div id="dtb" class="a tb"></div>
<div class="a" style="left:321px;top:287px;width:2px;height:2px;background:#6f8fbf"></div>
<div class="a" style="left:321px;top:291px;width:2px;height:2px;background:#6f8fbf"></div>
<div class="a" style="left:321px;top:295px;width:2px;height:2px;background:#6f8fbf"></div>
<div class="a" style="left:321px;top:299px;width:2px;height:2px;background:#6f8fbf"></div>
<svg class="a" style="left:337px;top:284px" width="18" height="18"><use href="#iPlus"/></svg>
<div class="dd" style="left:369px;top:292px"></div>
<svg class="a" style="left:389px;top:284px" width="18" height="18"><use href="#iEdit"/></svg>
<svg class="a" style="left:421px;top:284px" width="18" height="18"><use href="#iDel"/></svg>
<div class="sep" style="left:449px;top:281px;height:25px"></div>
<svg class="a" style="left:462px;top:284px" width="18" height="18"><use href="#iRef"/></svg>
<div class="sep" style="left:490px;top:281px;height:25px"></div>
<svg class="a" style="left:503px;top:284px" width="18" height="18"><use href="#iPrint"/></svg>
<div class="dd" style="left:535px;top:292px"></div>
<div class="sep" style="left:551px;top:281px;height:25px"></div>
<svg class="a" style="left:564px;top:284px" width="18" height="18"><use href="#iFunnel"/></svg>
<div class="dd" style="left:596px;top:292px"></div>
<div class="sep" style="left:612px;top:281px;height:25px"></div>
<svg class="a" style="left:625px;top:284px" width="18" height="18"><use href="#iGearWin"/></svg>
<div class="sep" style="left:653px;top:281px;height:25px"></div>
<svg class="a" style="left:665px;top:284px" width="20" height="18"><use href="#iUp"/></svg>
<svg class="a" style="left:697px;top:284px" width="20" height="18"><use href="#iDown"/></svg>
<div class="sep" style="left:726px;top:281px;height:25px"></div>
<svg class="a" style="left:738px;top:284px" width="20" height="18"><use href="#iOut"/></svg>
<svg class="a" style="left:770px;top:284px" width="20" height="18"><use href="#iIn"/></svg>
<svg class="a" style="left:802px;top:284px" width="20" height="18"><use href="#iCalc"/></svg>
<svg class="a" style="left:834px;top:283px" width="20" height="20"><use href="#iTbl2"/></svg>
<div class="dd" style="left:867px;top:292px"></div>
<svg class="a" style="left:887px;top:284px" width="18" height="18"><use href="#iLoop"/></svg>
<div class="t " style="left:918px;top:282px;font-family:'Liberation Serif';font-style:italic;font-size:21px;line-height:20px;font-weight:normal;color:#2a2a2a;-webkit-text-stroke:0.5px #2a2a2a">fx</div>
<div class="sep" style="left:947px;top:281px;height:25px"></div>
<svg class="a" style="left:962px;top:284px" width="18" height="18"><use href="#iStar"/></svg>
<div class="t " style="left:985px;top:285px;font-size:15.6px;line-height:17px;color:#1a3f8e">Подробно</div>
<div class="dd" style="left:1061px;top:292px"></div>
<div class="ddl" style="left:1082px;top:292px"></div>
<div class="a" style="left:316px;top:308px;width:917px;height:411px;background:#fff;border-left:1px solid #8fb1df"></div>
<div class="a hdr" style="left:317px;top:309px;width:916px;height:25px"></div>
<div class="a ind" style="left:318px;top:310px;width:17px;height:374px;border-bottom:1px solid #9ebbdf;border-left:1px solid #9ebbdf"></div>
<div class="vl" style="left:621px;top:310px;height:23px;background:#a3bcdf"></div>
<div class="vl" style="left:724px;top:310px;height:23px;background:#a3bcdf"></div>
<div class="vl" style="left:805px;top:310px;height:23px;background:#a3bcdf"></div>
<div class="vl" style="left:968px;top:310px;height:23px;background:#a3bcdf"></div>
<div class="vl" style="left:1214px;top:310px;height:23px;background:#a3bcdf"></div>
<div class="t hc" style="left:340px;top:314px;">Обозначение</div>
<div class="t hc" style="left:627px;top:314px;">Наименование</div>
<div class="t hc" style="left:729px;top:314px;">Тип</div>
<div class="t hc" style="left:810px;top:314px;">Значение</div>
<div class="t hc" style="left:974px;top:314px;">Уникальный идентификатор</div>
<div class="hl" style="left:371px;top:358px;width:844px"></div>
<div class="hl" style="left:319px;top:358px;width:15px;background:#b9cfea"></div>
<div class="vl" style="left:371px;top:334px;height:25px"></div>
<div class="vl" style="left:621px;top:334px;height:25px"></div>
<div class="vl" style="left:724px;top:334px;height:25px"></div>
<div class="vl" style="left:805px;top:334px;height:25px"></div>
<div class="vl" style="left:968px;top:334px;height:25px"></div>
<div class="vl" style="left:1214px;top:334px;height:25px"></div>
<div class="t " style="left:376px;top:340px;">порядок выполнения</div>
<div class="t " style="left:626px;top:340px;">последовател...</div>
<div class="t" style="left:729px;top:340px;font-size:12px;transform:scaleX(1.1070);transform-origin:0 0;">Integer</div>
<div class="t lat" style="left:810px;top:340px;">1</div>
<div class="t" style="left:973px;top:340px;font-size:12px;transform:scaleX(0.9400);transform-origin:0 0;">VGB_WORK_SEQUENCE</div>
<svg class="a" style="left:355px;top:339px" width="14" height="14"><use href="#iInfo"/></svg>
<div class="hl" style="left:371px;top:383px;width:844px"></div>
<div class="hl" style="left:319px;top:383px;width:15px;background:#b9cfea"></div>
<div class="vl" style="left:371px;top:359px;height:25px"></div>
<div class="vl" style="left:621px;top:359px;height:25px"></div>
<div class="vl" style="left:724px;top:359px;height:25px"></div>
<div class="vl" style="left:805px;top:359px;height:25px"></div>
<div class="vl" style="left:968px;top:359px;height:25px"></div>
<div class="vl" style="left:1214px;top:359px;height:25px"></div>
<div class="t " style="left:376px;top:365px;">Тип нормирования</div>
<div class="t" style="left:729px;top:365px;font-size:12px;transform:scaleX(1.1070);transform-origin:0 0;">Integer</div>
<div class="t lat" style="left:810px;top:365px;">2</div>
<div class="t" style="left:973px;top:365px;font-size:12px;transform:scaleX(0.9475);transform-origin:0 0;">VGB_NORM_TYPE</div>
<svg class="a" style="left:355px;top:364px" width="14" height="14"><use href="#iInfo"/></svg>
<div class="hl" style="left:371px;top:408px;width:844px"></div>
<div class="hl" style="left:319px;top:408px;width:15px;background:#b9cfea"></div>
<div class="vl" style="left:371px;top:384px;height:25px"></div>
<div class="vl" style="left:621px;top:384px;height:25px"></div>
<div class="vl" style="left:724px;top:384px;height:25px"></div>
<div class="vl" style="left:805px;top:384px;height:25px"></div>
<div class="vl" style="left:968px;top:384px;height:25px"></div>
<div class="vl" style="left:1214px;top:384px;height:25px"></div>
<div class="t " style="left:376px;top:390px;">Учёт выполнения работ</div>
<div class="t " style="left:626px;top:390px;">Способ учёта ...</div>
<div class="t" style="left:729px;top:390px;font-size:12px;transform:scaleX(1.1070);transform-origin:0 0;">Integer</div>
<div class="t lat" style="left:810px;top:390px;">1</div>
<div class="t" style="left:973px;top:390px;font-size:12px;transform:scaleX(0.9479);transform-origin:0 0;">VGB_CONTROL_TYPE</div>
<svg class="a" style="left:355px;top:389px" width="14" height="14"><use href="#iInfo"/></svg>
<div class="hl" style="left:371px;top:433px;width:844px"></div>
<div class="hl" style="left:319px;top:433px;width:15px;background:#b9cfea"></div>
<div class="vl" style="left:371px;top:409px;height:25px"></div>
<div class="vl" style="left:621px;top:409px;height:25px"></div>
<div class="vl" style="left:724px;top:409px;height:25px"></div>
<div class="vl" style="left:805px;top:409px;height:25px"></div>
<div class="vl" style="left:968px;top:409px;height:25px"></div>
<div class="vl" style="left:1214px;top:409px;height:25px"></div>
<div class="t " style="left:376px;top:415px;">Отключить Помощник мастера</div>
<div class="t" style="left:729px;top:415px;font-size:12px;transform:scaleX(1.0182);transform-origin:0 0;">Boolean</div>
<div class="t lat" style="left:810px;top:415px;">True</div>
<div class="t" style="left:973px;top:415px;font-size:12px;transform:scaleX(0.9708);transform-origin:0 0;">VGB_PLANNING_ASSISTANCE_OFF</div>
<svg class="a" style="left:355px;top:414px" width="14" height="14"><use href="#iInfo"/></svg>
<div class="hl" style="left:371px;top:458px;width:844px"></div>
<div class="hl" style="left:319px;top:458px;width:15px;background:#b9cfea"></div>
<div class="vl" style="left:371px;top:434px;height:25px"></div>
<div class="vl" style="left:621px;top:434px;height:25px"></div>
<div class="vl" style="left:724px;top:434px;height:25px"></div>
<div class="vl" style="left:805px;top:434px;height:25px"></div>
<div class="vl" style="left:968px;top:434px;height:25px"></div>
<div class="vl" style="left:1214px;top:434px;height:25px"></div>
<div class="t " style="left:376px;top:440px;">Приоритет</div>
<div class="t" style="left:729px;top:440px;font-size:12px;transform:scaleX(1.1070);transform-origin:0 0;">Integer</div>
<div class="t lat" style="left:810px;top:440px;">1</div>
<div class="t" style="left:973px;top:440px;font-size:12px;transform:scaleX(1.0265);transform-origin:0 0;">VGB_priority</div>
<svg class="a" style="left:355px;top:439px" width="14" height="14"><use href="#iInfo"/></svg>
<div class="hl" style="left:371px;top:483px;width:844px"></div>
<div class="hl" style="left:319px;top:483px;width:15px;background:#b9cfea"></div>
<div class="vl" style="left:371px;top:459px;height:25px"></div>
<div class="vl" style="left:621px;top:459px;height:25px"></div>
<div class="vl" style="left:724px;top:459px;height:25px"></div>
<div class="vl" style="left:805px;top:459px;height:25px"></div>
<div class="vl" style="left:968px;top:459px;height:25px"></div>
<div class="vl" style="left:1214px;top:459px;height:25px"></div>
<div class="t " style="left:376px;top:465px;">Блокировка</div>
<div class="t" style="left:729px;top:465px;font-size:12px;transform:scaleX(1.0182);transform-origin:0 0;">Boolean</div>
<div class="t lat" style="left:810px;top:465px;">True</div>
<div class="t" style="left:973px;top:465px;font-size:12px;transform:scaleX(0.9739);transform-origin:0 0;">VGB_Block</div>
<svg class="a" style="left:355px;top:464px" width="14" height="14"><use href="#iInfo"/></svg>
<svg class="a" style="left:339px;top:466px" width="9" height="9"><use href="#iMinus"/></svg>
<div class="hl" style="left:389px;top:508px;width:826px"></div>
<div class="hl" style="left:319px;top:508px;width:15px;background:#b9cfea"></div>
<div class="vl" style="left:389px;top:484px;height:25px"></div>
<div class="vl" style="left:621px;top:484px;height:25px"></div>
<div class="vl" style="left:724px;top:484px;height:25px"></div>
<div class="vl" style="left:805px;top:484px;height:25px"></div>
<div class="vl" style="left:968px;top:484px;height:25px"></div>
<div class="vl" style="left:1214px;top:484px;height:25px"></div>
<div class="t " style="left:394px;top:490px;">Время начала</div>
<div class="t" style="left:729px;top:490px;font-size:12px;transform:scaleX(1.1183);transform-origin:0 0;">Time</div>
<div class="t lat" style="left:810px;top:490px;;letter-spacing:.45px">12:00:00</div>
<div class="t" style="left:973px;top:490px;font-size:12px;transform:scaleX(1.0066);transform-origin:0 0;">VGB_START_TIME</div>
<svg class="a" style="left:373px;top:489px" width="14" height="14"><use href="#iInfo"/></svg>
<div class="hl" style="left:389px;top:533px;width:826px"></div>
<div class="hl" style="left:319px;top:533px;width:15px;background:#b9cfea"></div>
<div class="vl" style="left:389px;top:509px;height:25px"></div>
<div class="vl" style="left:621px;top:509px;height:25px"></div>
<div class="vl" style="left:724px;top:509px;height:25px"></div>
<div class="vl" style="left:805px;top:509px;height:25px"></div>
<div class="vl" style="left:968px;top:509px;height:25px"></div>
<div class="vl" style="left:1214px;top:509px;height:25px"></div>
<div class="t " style="left:394px;top:515px;">Время окончания</div>
<div class="t" style="left:729px;top:515px;font-size:12px;transform:scaleX(1.1183);transform-origin:0 0;">Time</div>
<div class="t lat" style="left:810px;top:515px;;letter-spacing:.45px">13:00:00</div>
<div class="t" style="left:973px;top:515px;font-size:12px;transform:scaleX(1.0009);transform-origin:0 0;">VGB_FINISH_TIME</div>
<svg class="a" style="left:373px;top:514px" width="14" height="14"><use href="#iInfo"/></svg>
<div class="hl" style="left:371px;top:558px;width:844px"></div>
<div class="hl" style="left:319px;top:558px;width:15px;background:#b9cfea"></div>
<div class="vl" style="left:371px;top:534px;height:25px"></div>
<div class="vl" style="left:621px;top:534px;height:25px"></div>
<div class="vl" style="left:724px;top:534px;height:25px"></div>
<div class="vl" style="left:805px;top:534px;height:25px"></div>
<div class="vl" style="left:968px;top:534px;height:25px"></div>
<div class="vl" style="left:1214px;top:534px;height:25px"></div>
<div class="t " style="left:376px;top:540px;">Блокировка</div>
<div class="t" style="left:729px;top:540px;font-size:12px;transform:scaleX(1.0182);transform-origin:0 0;">Boolean</div>
<div class="t lat" style="left:810px;top:540px;">True</div>
<div class="t" style="left:973px;top:540px;font-size:12px;transform:scaleX(0.9739);transform-origin:0 0;">VGB_Block</div>
<svg class="a" style="left:355px;top:539px" width="14" height="14"><use href="#iInfo"/></svg>
<svg class="a" style="left:339px;top:541px" width="9" height="9"><use href="#iMinus"/></svg>
<div class="hl" style="left:389px;top:583px;width:826px"></div>
<div class="hl" style="left:319px;top:583px;width:15px;background:#b9cfea"></div>
<div class="vl" style="left:389px;top:559px;height:25px"></div>
<div class="vl" style="left:621px;top:559px;height:25px"></div>
<div class="vl" style="left:724px;top:559px;height:25px"></div>
<div class="vl" style="left:805px;top:559px;height:25px"></div>
<div class="vl" style="left:968px;top:559px;height:25px"></div>
<div class="vl" style="left:1214px;top:559px;height:25px"></div>
<div class="t " style="left:394px;top:565px;">Время начала</div>
<div class="t" style="left:729px;top:565px;font-size:12px;transform:scaleX(1.1183);transform-origin:0 0;">Time</div>
<div class="t lat" style="left:810px;top:565px;;letter-spacing:.45px">17:00:00</div>
<div class="t" style="left:973px;top:565px;font-size:12px;transform:scaleX(1.0066);transform-origin:0 0;">VGB_START_TIME</div>
<svg class="a" style="left:373px;top:564px" width="14" height="14"><use href="#iInfo"/></svg>
<div class="hl" style="left:389px;top:608px;width:826px"></div>
<div class="hl" style="left:319px;top:608px;width:15px;background:#b9cfea"></div>
<div class="vl" style="left:389px;top:584px;height:25px"></div>
<div class="vl" style="left:621px;top:584px;height:25px"></div>
<div class="vl" style="left:724px;top:584px;height:25px"></div>
<div class="vl" style="left:805px;top:584px;height:25px"></div>
<div class="vl" style="left:968px;top:584px;height:25px"></div>
<div class="vl" style="left:1214px;top:584px;height:25px"></div>
<div class="t " style="left:394px;top:590px;">Время окончания</div>
<div class="t" style="left:729px;top:590px;font-size:12px;transform:scaleX(1.1183);transform-origin:0 0;">Time</div>
<div class="t lat" style="left:810px;top:590px;;letter-spacing:.45px">23:59:59</div>
<div class="t" style="left:973px;top:590px;font-size:12px;transform:scaleX(1.0009);transform-origin:0 0;">VGB_FINISH_TIME</div>
<svg class="a" style="left:373px;top:589px" width="14" height="14"><use href="#iInfo"/></svg>
<div class="hl" style="left:371px;top:633px;width:844px"></div>
<div class="hl" style="left:319px;top:633px;width:15px;background:#b9cfea"></div>
<div class="vl" style="left:371px;top:609px;height:25px"></div>
<div class="vl" style="left:621px;top:609px;height:25px"></div>
<div class="vl" style="left:724px;top:609px;height:25px"></div>
<div class="vl" style="left:805px;top:609px;height:25px"></div>
<div class="vl" style="left:968px;top:609px;height:25px"></div>
<div class="vl" style="left:1214px;top:609px;height:25px"></div>
<div class="t " style="left:376px;top:615px;">Блокировка</div>
<div class="t" style="left:729px;top:615px;font-size:12px;transform:scaleX(1.0182);transform-origin:0 0;">Boolean</div>
<div class="t lat" style="left:810px;top:615px;">True</div>
<div class="t" style="left:973px;top:615px;font-size:12px;transform:scaleX(0.9739);transform-origin:0 0;">VGB_Block</div>
<svg class="a" style="left:355px;top:614px" width="14" height="14"><use href="#iInfo"/></svg>
<svg class="a" style="left:339px;top:616px" width="9" height="9"><use href="#iMinus"/></svg>
<div class="hl" style="left:389px;top:658px;width:826px"></div>
<div class="hl" style="left:319px;top:658px;width:15px;background:#b9cfea"></div>
<div class="vl" style="left:389px;top:634px;height:25px"></div>
<div class="vl" style="left:621px;top:634px;height:25px"></div>
<div class="vl" style="left:724px;top:634px;height:25px"></div>
<div class="vl" style="left:805px;top:634px;height:25px"></div>
<div class="vl" style="left:968px;top:634px;height:25px"></div>
<div class="vl" style="left:1214px;top:634px;height:25px"></div>
<div class="t " style="left:394px;top:640px;">Время начала</div>
<div class="t" style="left:729px;top:640px;font-size:12px;transform:scaleX(1.1183);transform-origin:0 0;">Time</div>
<div class="t lat" style="left:810px;top:640px;;letter-spacing:.45px">0:00:00</div>
<div class="t" style="left:973px;top:640px;font-size:12px;transform:scaleX(1.0066);transform-origin:0 0;">VGB_START_TIME</div>
<svg class="a" style="left:373px;top:639px" width="14" height="14"><use href="#iInfo"/></svg>
<div class="a" style="left:389px;top:659px;width:825px;height:24px;background:#316ac5"></div>
<svg class="a" style="left:324px;top:667px" width="7" height="10"><path d="M1 1l4 4-4 4" stroke="#4a6ea8" stroke-width="2" fill="none"/></svg>
<div class="hl" style="left:389px;top:683px;width:826px"></div>
<div class="hl" style="left:319px;top:683px;width:15px;background:#b9cfea"></div>
<div class="vl" style="left:389px;top:659px;height:25px"></div>
<div class="vl" style="left:621px;top:659px;height:25px"></div>
<div class="vl" style="left:724px;top:659px;height:25px"></div>
<div class="vl" style="left:805px;top:659px;height:25px"></div>
<div class="vl" style="left:968px;top:659px;height:25px"></div>
<div class="vl" style="left:1214px;top:659px;height:25px"></div>
<div class="t " style="left:394px;top:665px;color:#fff">Время окончания</div>
<div class="t" style="left:729px;top:665px;font-size:12px;transform:scaleX(1.1183);transform-origin:0 0;color:#fff">Time</div>
<div class="t lat" style="left:810px;top:665px;color:#fff;letter-spacing:.45px">7:00:00</div>
<div class="t" style="left:973px;top:665px;font-size:12px;transform:scaleX(1.0009);transform-origin:0 0;color:#fff">VGB_FINISH_TIME</div>
<svg class="a" style="left:373px;top:664px" width="14" height="14"><use href="#iInfo"/></svg>
<svg class="a" style="left:0;top:0" width="1233" height="719"><path d="M351 471.5h1M351 546.5h1M351 621.5h1M344.5 346v120M344.5 476v65M344.5 551v65M345 346.5h8M345 371.5h8M345 396.5h8M345 421.5h8M345 446.5h8M362.5 484v37M363 496.5h9M363 521.5h9M362.5 559v37M363 571.5h9M363 596.5h9M362.5 634v37M363 646.5h9M363 671.5h9" stroke="#000" stroke-width="1" stroke-dasharray="1 1" fill="none"/></svg>
<svg class="a" style="left:0;top:0" width="1233" height="719"><rect x="330.75" y="459.75" width="785.5" height="230.5" rx="19" ry="19" fill="none" stroke="#f00" stroke-width="3.5"/></svg>
</body></html>
